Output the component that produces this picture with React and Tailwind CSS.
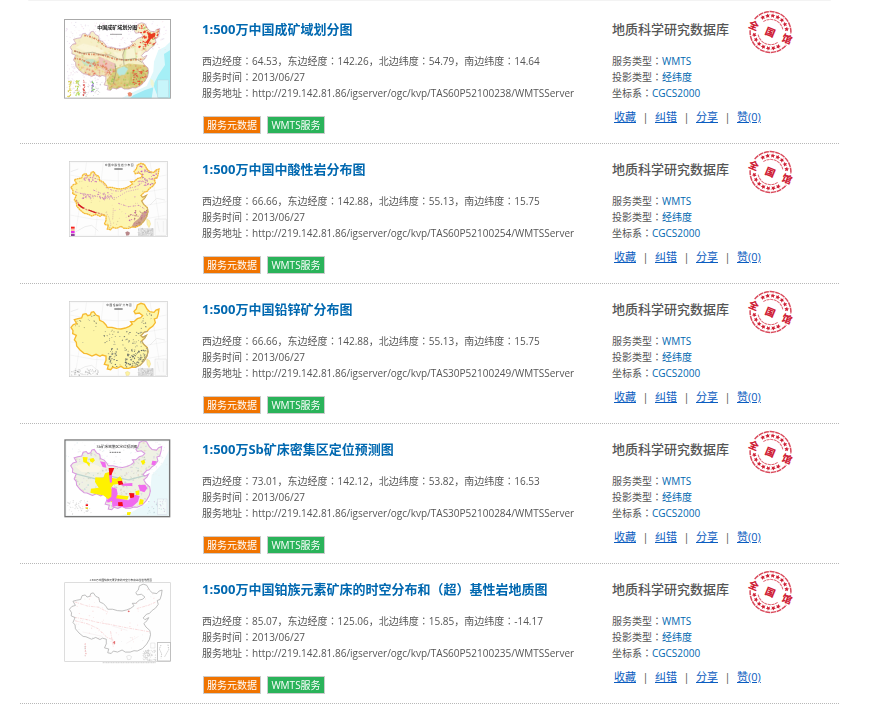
import React from "react";

const OUTLINE =
  "M63 127L70 119L80 116L73 104L84 101L95 99L99 88L108 86L113 92L121 90L124 82L131 80L138 90L147 94L149 106L160 111L168 120L172 127L186 127L200 131L213 132L226 129L238 124L247 117L242 110L252 110L262 101L272 98L278 92L268 84L256 86L252 79L259 72L262 60L273 55L283 58L291 72L299 80L312 82L318 75L327 72L325 86L321 99L313 102L316 113L308 124L299 130L291 139L283 141L273 152L278 157L289 151L284 160L275 168L281 178L292 188L294 200L291 213L283 227L271 240L256 247L247 246L236 250L222 250L213 244L200 250L188 247L182 254L172 252L175 241L163 238L168 226L168 213L157 210L150 214L138 208L126 213L110 206L102 205L90 195L80 183L79 172L73 165L79 151L68 146L69 137Z";
const HAINAN = "M226 262L233 259L240 263L237 271L229 272Z";
const TAIWAN = "M290 222L298 226L302 237L297 248L291 238Z";

function speckles(seed, count, [x, y, w, h], colors, size) {
  let s = seed * 2654435;
  const next = () => {
    s = (s + 0x6d2b79f5) | 0;
    let t = Math.imul(s ^ (s >>> 15), 1 | s);
    t = (t + Math.imul(t ^ (t >>> 7), 61 | t)) ^ t;
    return ((t ^ (t >>> 14)) >>> 0) / 4294967296;
  };
  return Array.from({ length: count }, () => ({
    x: Math.round(x + next() * w),
    y: Math.round(y + next() * h),
    w: Math.round(2 + next() * size),
    h: Math.round(2 + next() * size * 0.6),
    r: Math.round(next() * 80 - 40),
    c: colors[Math.floor(next() * colors.length)],
  }));
}

function Specks({ seed, count, area, colors, size = 3, opacity = 1 }) {
  return (
    <g opacity={opacity}>
      {speckles(seed, count, area, colors, size).map((p, i) => (
        <rect key={i} x={p.x} y={p.y} width={p.w} height={p.h} fill={p.c} transform={`rotate(${p.r} ${p.x} ${p.y})`} />
      ))}
    </g>
  );
}

function MapText({ x, y, size, children, fill = "#333", bold }) {
  return (
    <text x={x} y={y} fontSize={size} fill={fill} textAnchor="middle" fontWeight={bold ? 700 : 400} fontFamily="'Noto Sans CJK SC', sans-serif">
      {children}
    </text>
  );
}

const FULL = [60, 55, 270, 200];

function Clip({ id }) {
  return (
    <clipPath id={id}>
      <path d={OUTLINE} />
    </clipPath>
  );
}

function Metallogenic() {
  return (
    <g transform="translate(-42 -54)">
      <rect x="44" y="59" width="317" height="236" fill="#fff" />
      <path d="M361 125L345 140L325 150L312 185L310 215L290 258L245 278L215 295H361Z" fill="#dff8fb" />
      <path d="M361 150L342 162L345 195L325 225L310 255L325 295H361Z" fill="#a5eff6" />
      <path d="M250 286L285 270L310 262L305 295H240Z" fill="#9feaf4" />
      <Specks seed={51} count={200} area={[46, 62, 300, 90]} colors={["#f1e3f3", "#e9e4ee", "#f8e8ef"]} />
      <Specks seed={52} count={110} area={[46, 190, 110, 90]} colors={["#eee6f3", "#f3e5ee"]} />
      <g transform="translate(-4 12) scale(1.02)">
        <clipPath id="m1"><path d={OUTLINE} /></clipPath>
        <g clipPath="url(#m1)">
          <rect x="50" y="45" width="300" height="220" fill="#f6efc8" />
          <path d="M75 148L120 160L170 160L190 178L192 215L150 214L100 205L70 170Z" fill="#efe2b4" />
          <path d="M150 155L195 175L200 205L170 200L140 180Z" fill="#efc3ba" />
          <path d="M95 165L130 162L150 175L128 186L105 180Z" fill="#c5e3c6" />
          <path d="M195 190L235 175L290 180L298 215L250 255L180 255L170 225Z" fill="#dccf83" />
          <path d="M220 135L255 130L260 165L222 170Z" fill="#e0e8ac" />
          <path d="M240 200L270 195L285 205L260 235L235 240Z" fill="#c9c872" />
          <Specks seed={7} count={330} area={FULL} colors={["#dccf8e", "#bcd67c", "#efb085", "#f4eac1", "#f1e9a4", "#f7f0d0"]} size={5} opacity={0.75} />
          <path d="M78 127L102 116L135 124L165 138L150 144L110 141ZM228 135L252 128L256 160L226 162ZM190 140L215 142L216 160L198 156ZM262 140L275 135L270 152L280 172L258 168Z" fill="#faf6dc" opacity="0.85" />
          <Specks seed={8} count={150} area={[172, 180, 122, 75]} colors={["#8cc04b", "#de7a58", "#a9c65c", "#e6a954", "#d2ce6e"]} size={4} />
          <path d="M203 190L222 183L234 190L224 207L208 211L200 200Z" fill="#b8e8df" />
          <Specks seed={9} count={75} area={[262, 55, 58, 75]} colors={["#ee4326", "#e84f35", "#e0805c", "#b9cd74"]} size={6} />
          <path d="M292 84L303 88L314 84L312 97L301 102L291 120L286 112L294 100Z" fill="#ea3c20" />
          <Specks seed={10} count={45} area={[245, 195, 45, 50]} colors={["#f0452c", "#dd5a44", "#e2714e"]} size={5} />
          <Specks seed={11} count={90} area={[75, 168, 95, 42]} colors={["#e58f6c", "#e5584a", "#e5dc5a", "#ecbd9e"]} size={4} />
          <path d="M105 92L125 97L145 106L165 124L186 130L210 135L235 130L255 117M75 138L100 146L120 148L155 149L195 162L230 165L285 162M75 160L95 163L115 172L155 182L172 192L185 210" fill="none" stroke="#db8a62" strokeWidth="5" strokeDasharray="6 3 2 3" />
          <path d="M75 138L100 145L130 142L155 150L180 150L205 162L225 165M195 175L198 200L190 235M225 130L218 150L222 180M225 165L255 160L275 172" fill="none" stroke="#8f806a" strokeWidth="1.5" />
        </g>
        <path d={OUTLINE} fill="none" stroke="#c99dbd" strokeWidth="2" />
        <path d={HAINAN} fill="#e98b70" transform="translate(6 0)" />
        <path d={TAIWAN} fill="#eff5d5" transform="translate(9 -2)" />
      </g>
      <Specks seed={12} count={30} area={[52, 240, 9, 48]} colors={["#e5d95d", "#d6c94e"]} />
      <Specks seed={13} count={30} area={[76, 240, 9, 48]} colors={["#9adf58", "#d8cf62"]} />
      <Specks seed={14} count={26} area={[99, 240, 4, 48]} colors={["#ef6b61", "#cb4a4a"]} />
      <Specks seed={15} count={20} area={[123, 240, 6, 42]} colors={["#79c760", "#9c78d5"]} />
      <Specks seed={16} count={40} area={[60, 240, 90, 48]} colors={["#d0d0d0"]} size={2} />
      <rect x="322" y="240" width="34" height="52" fill="#c8f5fa" stroke="#b9c6d4" />
      <MapText x={202} y={88} size={15} bold fill="#111">中国成矿域划分图</MapText>
      <path d="M181 103H217" stroke="#777" strokeWidth="3" strokeDasharray="2 1" />
      <rect x="43.5" y="58.5" width="318" height="236" fill="none" stroke="#aaa" strokeWidth="3" />
    </g>
  );
}

function GridFrame() {
  return (
    <>
      <rect x="58" y="49" width="294" height="226" fill="#fdfdfd" stroke="#ccc" strokeWidth="2" />
      <path d="M60 90Q205 125 350 90M60 130Q205 165 350 130M60 170Q205 205 350 170M60 210Q205 245 350 210M110 50L75 274M160 50L135 274M205 50V274M250 50L275 274M300 50L335 274" fill="none" stroke="#e5e5e5" strokeWidth="1" />
      <path d="M61 53H349V271H61Z" fill="none" stroke="#eee" />
      <path d="M78 260L105 245L125 241L145 258M300 180L320 160L345 165M62 80L85 72" fill="none" stroke="#ddd" strokeWidth="1.5" />
    </>
  );
}

function Insets() {
  return (
    <>
      <rect x="315" y="222" width="34" height="50" fill="#fafafa" stroke="#d2d2d2" />
      <path d="M322 230L328 260M340 228V262" stroke="#ddd" />
      <rect x="264" y="250" width="47" height="23" fill="#dadada" />
      <Specks seed={66} count={90} area={[264, 250, 43, 20]} colors={["#c3c3c3", "#eee", "#cfcfcf"]} />
    </>
  );
}

function AcidicRock() {
  return (
    <g transform="translate(-42 -39)">
      <Clip id="m2" />
      <GridFrame />
      <Insets />
      <path d={OUTLINE} fill="#fdf5b0" />
      <g clipPath="url(#m2)">
        <path d="M293 194L295 215L270 242L242 250L252 232L267 220L276 204Z" fill="#cda18e" />
        <Specks seed={22} count={110} area={FULL} colors={["#e8cf9e", "#e3b5c5", "#e0d098"]} size={2} />
        <Specks seed={23} count={75} area={[263, 58, 55, 62]} colors={["#c65bc6", "#d27bb7", "#b079b2", "#e0a8b8"]} size={4} />
        <Specks seed={24} count={60} area={[235, 195, 60, 55]} colors={["#b46a7f", "#c86aac", "#b7886d"]} size={3} />
        <Specks seed={25} count={30} area={[100, 84, 50, 26]} colors={["#c86fc0", "#d795b8"]} size={3} />
        <Specks seed={26} count={40} area={[90, 142, 95, 20]} colors={["#cf85b8", "#dcb3b8"]} size={3} />
        <path d="M105 91L122 98L140 101L160 116L170 129L190 137L210 139L232 130L255 126L270 118L280 110L300 118M75 140L98 147L120 149L150 157L180 162M130 135L160 148L185 157L195 167M205 175L235 185L267 181L284 192" fill="none" stroke="#cf8bb8" strokeWidth="3" strokeDasharray="5 3 2 5" />
        <path d="M160 145L175 156L200 158L230 140L265 132" fill="none" stroke="#c683be" strokeWidth="2" strokeDasharray="3 4" />
        <path d="M78 165L92 185L110 194L135 201L165 211" fill="none" stroke="#dd9471" strokeWidth="4" strokeDasharray="6 2" />
        <path d="M84 178L101 190M116 195L138 204" stroke="#d51820" strokeWidth="4" />
        <path d="M168 202L177 218L183 239L178 251M190 190L188 224" fill="none" stroke="#d0a59b" strokeWidth="2" strokeDasharray="3 3" />
      </g>
      <path d={OUTLINE} fill="none" stroke="#f5b936" strokeWidth="4" strokeDasharray="6 1" />
      <path d="M273 152L278 157L289 151L284 160L275 168L281 178L292 188L294 200L291 213L283 227L271 240" fill="none" stroke="#aaa08d" strokeWidth="2" />
      <path d={HAINAN} fill="#b9888a" />
      <path d={TAIWAN} fill="#fdf3aa" stroke="#e6cc77" />
      <rect x="63" y="245" width="11" height="6" fill="#f5211c" />
      <rect x="63" y="252" width="11" height="6" fill="#f5c0a8" />
      <rect x="63" y="258" width="11" height="6" fill="#e52be6" />
      <rect x="63" y="266" width="11" height="7" fill="#90429b" />
      <MapText x={207} y={63} size={8}>中 国 中 酸 性 岩 分 布 图</MapText>
      <path d="M193 72H218" stroke="#444" strokeWidth="3" />
    </g>
  );
}

function LeadZinc() {
  return (
    <g transform="translate(-42 -39)">
      <Clip id="m3" />
      <GridFrame />
      <Insets />
      <path d={OUTLINE} fill="#fef6a8" />
      <g clipPath="url(#m3)">
        <Specks seed={31} count={40} area={FULL} colors={["#aaa98e", "#c4bc80"]} size={2} />
        <Specks seed={32} count={50} area={[160, 135, 115, 60]} colors={["#777c70", "#98987b"]} size={2} />
        <Specks seed={33} count={32} area={[173, 190, 26, 60]} colors={["#666e68", "#8a8d78"]} size={3} />
        <Specks seed={34} count={100} area={[225, 190, 68, 56]} colors={["#777b6d", "#909071", "#5b625f"]} size={3} />
        <Specks seed={35} count={16} area={[270, 75, 45, 65]} colors={["#77796c"]} size={2} />
        <Specks seed={36} count={12} area={[65, 85, 80, 50]} colors={["#88896b"]} size={2} />
      </g>
      <path d={OUTLINE} fill="none" stroke="#f6b92e" strokeWidth="4" />
      <path d="M293 139L283 141L273 152L278 157L289 151L284 160L275 168L281 178L292 188L294 200L291 213L283 227L271 240L256 247" fill="none" stroke="#aaa38a" strokeWidth="3" />
      <path d={HAINAN} fill="#fef3a0" stroke="#ddc987" />
      <path d={TAIWAN} fill="#fef3a0" stroke="#e6c666" />
      <Specks seed={37} count={60} area={[63, 252, 82, 17]} colors={["#ccc", "#ddd", "#aaa"]} size={2} />
      <MapText x={207} y={64} size={8}>中 国 铅 锌 矿 分 布 图</MapText>
      <path d="M193 72H218" stroke="#444" strokeWidth="3" />
    </g>
  );
}

function Antimony() {
  return (
    <g transform="translate(-42 -39)">
      <rect x="44" y="44" width="316" height="232" fill="#fff" />
      <path d="M360 70L338 115L305 150L298 230L245 262L200 276H360Z" fill="#eaf8fa" />
      <Specks seed={46} count={160} area={[48, 50, 300, 100]} colors={["#e8f2f4", "#eee", "#f0eef5"]} />
      <g transform="translate(-3 -10) scale(1.034 1.04)">
        <Clip id="m4" />
        <path d={OUTLINE} fill="#eff1e4" />
        <g clipPath="url(#m4)">
          <Specks seed={41} count={420} area={FULL} colors={["#d5decb", "#e5d9c9", "#c5dedb", "#e8e7cb", "#ddd7e4", "#cdd2c8"]} size={4} />
          <path d="M75 128L105 120L125 121L155 132L145 145L95 145Z" fill="#faf6e6" />
          <path d="M75 150L135 165L180 158L230 168L280 155" fill="none" stroke="#bed4ce" strokeWidth="4" />
        </g>
        <path d={OUTLINE} fill="none" stroke="#d998e0" strokeWidth="3" />
      </g>
      <path d="M98 96L113 97L111 109L120 115L118 125L110 115L100 111ZM120 101L130 99L135 106L128 113L120 109ZM136 157L160 158L165 145L180 140L183 158L200 161L210 154L218 166L203 177L190 179L183 190L200 210L236 214L232 224L205 222L185 232L170 219L160 211L140 208L121 203L123 191L146 188L135 171ZM272 108L283 104L286 113L278 120ZM256 199L268 196L268 209L258 211ZM270 222L281 224L279 238L266 239ZM231 262L243 261L240 271L231 270Z" fill="#fff200" />
      <path d="M150 109L166 112L169 128L158 126ZM177 150L186 147L186 172L180 174ZM185 186L200 191L203 207L198 220L235 226L255 209L269 213L264 230L247 245L226 248L200 243L187 246L186 228L173 233L170 226L184 215ZM215 176L247 174L247 183L215 182ZM264 180L286 179L292 190L283 202L270 197ZM307 107L320 109L314 121L304 119Z" fill="#f16bee" />
      <path d="M176 129L193 129L184 150L178 151ZM203 169L216 167L220 178L206 181ZM237 204L253 205L252 217L241 220ZM204 232L217 231L219 243L205 243Z" fill="#f20e17" />
      <rect x="48" y="216" width="107" height="56" fill="#fff" opacity="0.85" />
      <Specks seed={43} count={50} area={[52, 225, 70, 40]} colors={["#ccc", "#ddd"]} size={2} />
      <rect x="107" y="238" width="7" height="5" fill="#f20e17" />
      <rect x="107" y="247" width="7" height="5" fill="#e8ce32" />
      <rect x="107" y="256" width="7" height="5" fill="#ddd" />
      <rect x="323" y="222" width="28" height="46" fill="#f2fafa" stroke="#ccd" />
      <Specks seed={44} count={28} area={[292, 224, 54, 40]} colors={["#d5c8dd", "#c0d5d9"]} size={2} />
      <MapText x={201} y={68} size={11}>Sb矿床密集区定位预测图</MapText>
      <path d="M179 82H212" stroke="#777" strokeWidth="3" strokeDasharray="5 2" />
      <rect x="45" y="45" width="314" height="230" fill="none" stroke="#777" strokeWidth="4" />
      <rect x="48" y="48" width="308" height="224" fill="none" stroke="#d7dfe2" strokeWidth="1" />
    </g>
  );
}

function Platinum() {
  return (
    <g transform="translate(-42 -39)">
      <rect x="44" y="53" width="317" height="236" fill="#fefefe" stroke="#ccc" strokeWidth="2" />
      <g transform="translate(-8 0) scale(1.053 1.045)">
        <Clip id="m5" />
        <g clipPath="url(#m5)">
          <Specks seed={61} count={130} area={FULL} colors={["#fbe6e6", "#f0f0f0", "#f7dcdd"]} size={2} />
          <path d="M78 106L115 118L145 121L172 135M77 150L114 157L140 164L175 170L225 180L287 191M79 160L115 169L145 183L170 208L188 215M180 190L188 235M255 125L287 116L310 106" fill="none" stroke="#f7cdce" strokeWidth="2" strokeDasharray="8 2 3 3" />
          <path d="M100 192L157 205M185 175L228 188M225 225L260 205" fill="none" stroke="#efe0e2" />
        </g>
        <path d={OUTLINE} fill="none" stroke="#a5a5a5" strokeWidth="2" />
        <path d={HAINAN} fill="none" stroke="#bbb" />
      </g>
      <path d="M190 231L195 229L193 238ZM234 137L239 139L235 141Z" fill="#dd4b50" stroke="#dd4b50" />
      <Specks seed={63} count={18} area={[103, 236, 3, 35]} colors={["#efabad", "#ddd"]} size={2} />
      <Specks seed={64} count={85} area={[278, 254, 38, 31]} colors={["#ddd", "#ccc"]} size={2} />
      <path d="M302 234H315V249H302Z" fill="none" stroke="#ccc" />
      <rect x="323" y="232" width="38" height="56" fill="#fff" stroke="#aaa" strokeWidth="2" />
      <path d="M333 240L328 252L335 267L333 280M354 239L356 254L344 275" fill="none" stroke="#aaa" strokeWidth="2" strokeDasharray="4 3" />
      <MapText x={212} y={49} size={8}>1:500万中国铂族元素矿床的时空分布和基性岩地质图</MapText>
      <path d="M158 293H318" stroke="#bbb" strokeWidth="2" strokeDasharray="4 1" />
    </g>
  );
}

const RECORDS = [
  { title: "1:500万中国成矿域划分图", bounds: ["64.53", "142.26", "54.79", "14.64"], layer: "TAS60P52100238", Map: Metallogenic },
  { title: "1:500万中国中酸性岩分布图", bounds: ["66.66", "142.88", "55.13", "15.75"], layer: "TAS60P52100254", Map: AcidicRock },
  { title: "1:500万中国铅锌矿分布图", bounds: ["66.66", "142.88", "55.13", "15.75"], layer: "TAS30P52100249", Map: LeadZinc },
  { title: "1:500万Sb矿床密集区定位预测图", bounds: ["73.01", "142.12", "53.82", "16.53"], layer: "TAS30P52100284", Map: Antimony },
  { title: "1:500万中国铂族元素矿床的时空分布和（超）基性岩地质图", bounds: ["85.07", "125.06", "15.85", "-14.17"], layer: "TAS60P52100235", Map: Platinum },
];

const SIDES = ["西边经度", "东边经度", "北边纬度", "南边纬度"];

function Stamp() {
  const star = "M0-2L.6-.7L2-.6L1 .4L1.3 1.8L0 1L-1.3 1.8L-1 .4L-2-.6L-.6-.7Z";
  const angles = [-28, -10, 8, 26, 44, 62, 80, 152, 170, 188, 206, 224, 242, 260];
  const glyph = { fontSize: 10, fontWeight: 900, fill: "#cf2136", textAnchor: "middle", fontFamily: "'Noto Sans CJK SC', sans-serif" };
  return (
    <svg viewBox="0 0 60 60" className="absolute top-[-2px] left-[129px] size-[60px]" role="img" aria-label="全国馆">
      <g transform="translate(29.5 30) rotate(22)">
        <path d="M-19.5-6A20.400 20.400 0 0 1 19.5-6M-19.5 6A20.400 20.400 0 0 0 19.5 6" fill="none" stroke="#d9485a" strokeWidth="1.5" strokeDasharray="5 .7" />
        <path d="M-10.5-7A12.600 12.600 0 0 1 10.5-7M-10.5 7A12.600 12.600 0 0 0 10.5 7" fill="none" stroke="#df6472" strokeWidth="1" strokeDasharray="3 .6" />
        {angles.map((a) => (
          <path key={a} d={star} fill="#cf2136" transform={`rotate(${a - 22}) translate(0 -16.500) scale(1.2)`} />
        ))}
        <text x="-18" y="4" {...glyph}>全</text>
        <text x="0" y="4" {...glyph}>国</text>
        <text x="18" y="4" {...glyph}>馆</text>
      </g>
    </svg>
  );
}

function Colon() {
  return <span className="font-['Noto_Sans_CJK_TC',sans-serif]" lang="zh-TW">：</span>;
}

function Label({ children }) {
  return (
    <>
      {children}
      <Colon />
    </>
  );
}

function Record({ title, bounds, layer, Map }) {
  return (
    <li className="flex border-b border-dotted border-[#b8b8b8] pb-[9px]">
      <a href="#map" aria-label={title} className="ml-11 mr-[31px] shrink-0 pt-[14px]">
        <svg viewBox="0 0 321 258" className="block h-[86px] w-[107px]">
          <Map />
        </svg>
      </a>
      <div className="min-w-0 flex-1 pt-[15px]">
        <h2 className="mb-[14px] whitespace-nowrap text-[13px] leading-5 font-bold">
          <a href="#detail" className="text-[#0068b0]">{title}</a>
        </h2>
        <p>
          {SIDES.map((side, i) => (
            <React.Fragment key={side}>
              {i > 0 && "，"}
              <Label>{side}</Label>
              {bounds[i]}
            </React.Fragment>
          ))}
        </p>
        <p><Label>服务时间</Label>2013/06/27</p>
        <p className="whitespace-nowrap">
          <Label>服务地址</Label>
          http://219.142.81.86/igserver/ogc/kvp/{layer}/WMTSServer
        </p>
        <div className="mt-[15px] ml-px flex gap-[6px] text-white">
          <button type="button" className="h-[18px] w-[58px] border border-[#ccc] bg-[#f07400] text-center leading-4">服务元数据</button>
          <button type="button" className="h-[18px] w-[58px] border border-[#ccc] bg-[#2ab35a] text-center leading-4 whitespace-nowrap">WMTS服务</button>
        </div>
      </div>
      <div className="relative w-[227px] shrink-0 pt-[15px]">
        <h3 className="mb-[14px] text-[13px] leading-5 font-medium">地质科学研究数据库</h3>
        <p><Label>服务类型</Label><span className="text-[#0068b0]">WMTS</span></p>
        <p><Label>投影类型</Label><span className="text-[#0068b0]">经纬度</span></p>
        <p><Label>坐标系</Label><span className="text-[#0068b0]">CGCS2000</span></p>
        <div className="mt-[6px] ml-[2px] flex text-[11px] leading-5">
          {["收藏", "纠错", "分享", "赞(0)"].map((name, i) => (
            <React.Fragment key={name}>
              {i > 0 && <span className="w-[19px] text-center">|</span>}
              <a href="#action" className="text-[#0a5cc0] underline">{name}</a>
            </React.Fragment>
          ))}
        </div>
        <Stamp />
      </div>
    </li>
  );
}

export default function App() {
  return (
    <main className="bg-white pr-[38px] pl-5 font-['Open_Sans','Noto_Sans_CJK_SC',sans-serif] text-[10px] leading-4 text-[#555]" lang="zh-CN">
      <div className="mr-2 mb-[3px] ml-2 h-px rounded-b bg-[#f3f3f3]" />
      <ul>
        {RECORDS.map((r) => (
          <Record key={r.layer} {...r} />
        ))}
      </ul>
    </main>
  );
}
